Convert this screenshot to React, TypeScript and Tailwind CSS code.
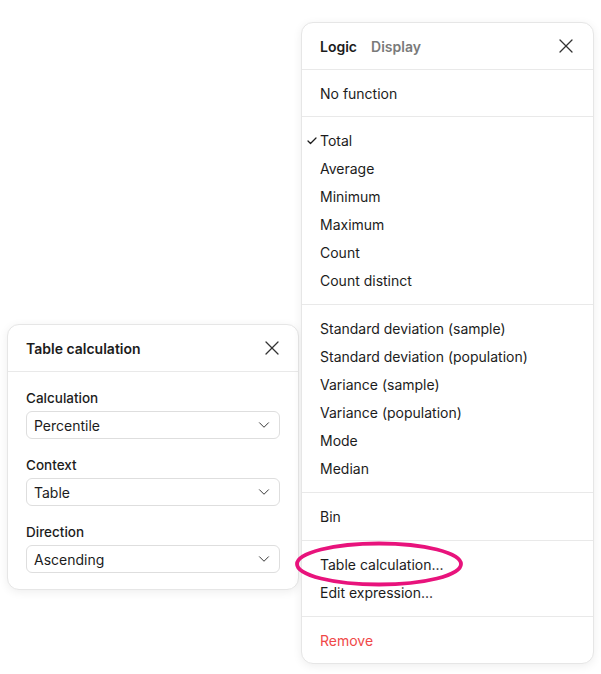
import { Check, ChevronDown, X } from 'lucide-react';

const groups: string[][] = [
  ['No function'],
  ['Total', 'Average', 'Minimum', 'Maximum', 'Count', 'Count distinct'],
  [
    'Standard deviation (sample)',
    'Standard deviation (population)',
    'Variance (sample)',
    'Variance (population)',
    'Mode',
    'Median',
  ],
  ['Bin'],
  ['Table calculation...', 'Edit expression...'],
];

const fields = [
  { label: 'Calculation', value: 'Percentile' },
  { label: 'Context', value: 'Table' },
  { label: 'Direction', value: 'Ascending' },
];

const TableCalcPanel = () => (
  <div className="mt-[324px] w-[292px] rounded-xl border border-[#e6e6e6] bg-white shadow-[0_2px_10px_rgba(0,0,0,0.07)]">
    <div className="flex h-[47px] items-center justify-between border-b border-[#e9e9e9] pl-[18px] pr-[14px]">
      <span className="text-[14px] font-semibold text-[#1c1c1c]">Table calculation</span>
      <X size={24} strokeWidth={1.3} className="text-[#333]" />
    </div>
    <div className="flex flex-col gap-[16px] px-[18px] pt-[16px] pb-[16px]">
      {fields.map((f) => (
        <div key={f.label} className="flex flex-col gap-[3px]">
          <span className="h-[20px] text-[13.5px] leading-[21px] font-medium text-[#1c1c1c]">{f.label}</span>
          <div className="flex h-[28px] items-center justify-between rounded-md border border-[#dedede] pl-[7px] pr-[6px]">
            <span className="text-[14px] text-[#1c1c1c]">{f.value}</span>
            <ChevronDown size={18} strokeWidth={1.3} className="text-[#333]" />
          </div>
        </div>
      ))}
    </div>
  </div>
);

const FunctionMenu = () => (
  <div className="mt-[22px] w-[293px] rounded-xl border border-[#e6e6e6] bg-white shadow-[0_2px_10px_rgba(0,0,0,0.07)]">
    <div className="flex h-[47px] items-center justify-between border-b border-[#e9e9e9] pl-[18px] pr-[15px]">
      <div className="flex items-center gap-[14px] text-[14px] font-semibold">
        <span className="text-[#1c1c1c]">Logic</span>
        <span className="text-[#7a7a7a]">Display</span>
      </div>
      <X size={24} strokeWidth={1.3} className="text-[#333]" />
    </div>
    {groups.map((items, i) => (
      <div key={i} className={`border-b border-[#e9e9e9] pt-[9px] ${i === 0 ? 'pb-[9px]' : 'pb-[10px]'}`}>
        {items.map((item) => (
          <div key={item} className="relative flex h-[28px] items-center pl-[18px] text-[14px] text-[#1c1c1c]">
            {item === 'Total' && (
              <Check size={12} strokeWidth={2.5} className="absolute left-[4px] top-[9px] text-[#1c1c1c]" />
            )}
            {item}
          </div>
        ))}
      </div>
    ))}
    <div className="pt-[9px] pb-[9px]">
      <div className="flex h-[28px] items-center pl-[18px] text-[14px] text-[#f04848]">Remove</div>
    </div>
  </div>
);

export default function App() {
  return (
    <div className="relative h-[674px] w-[601px] bg-white font-['Inter',sans-serif]">
      <div className="flex items-start gap-[2px] pl-[7px]">
        <TableCalcPanel />
        <FunctionMenu />
      </div>
      <svg className="pointer-events-none absolute left-[294px] top-[540px]" width="170" height="48" viewBox="0 0 170 48">
        <ellipse cx="85" cy="24" rx="82" ry="20.5" fill="none" stroke="#e8137c" strokeWidth="3.8" />
      </svg>
    </div>
  );
}
